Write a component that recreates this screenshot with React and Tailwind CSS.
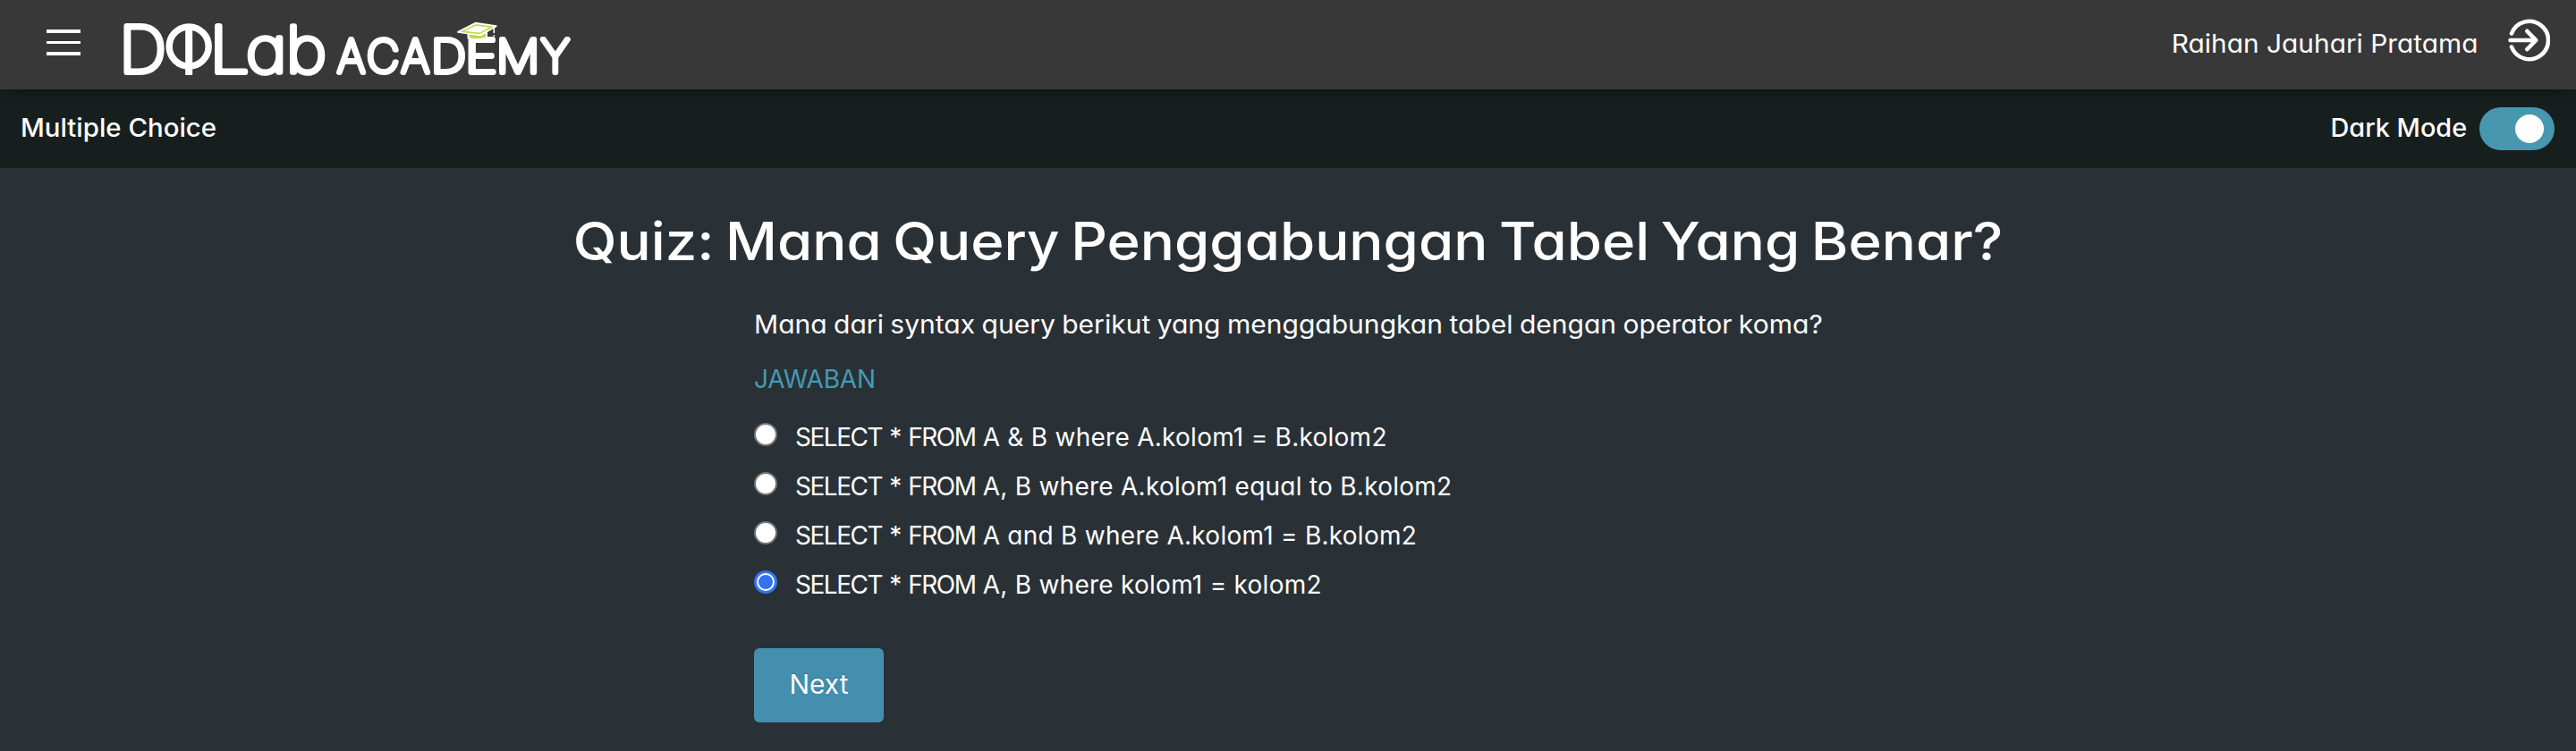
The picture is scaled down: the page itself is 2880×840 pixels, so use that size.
const OPTIONS = [
  { sql: "SELECT * FROM", rest: " A & B where A.kolom1 = B.kolom2", checked: false },
  { sql: "SELECT * FROM", rest: " A, B where A.kolom1 equal to B.kolom2", checked: false },
  { sql: "SELECT * FROM", rest: " A and B where A.kolom1 = B.kolom2", checked: false },
  { sql: "SELECT * FROM", rest: " A, B where kolom1 = kolom2", checked: true },
];

function Logo() {
  return (
    <svg
      width="510"
      height="72"
      viewBox="134 18 510 72"
      className="shrink-0 overflow-visible font-['Inter',sans-serif] font-thin [font-feature-settings:'cv11']"
      fill="#fff"
      stroke="#fff"
      strokeLinejoin="round"
      strokeLinecap="round"
    >
      <g fontSize="71.5" strokeWidth="6">
        <text transform="translate(133.3 81) scale(1.03 1)">D</text>
        <text transform="translate(234.5 81) scale(1.1 1)">L</text>
        <text transform="translate(274.8 81) scale(1.11 1)" strokeWidth="5.6">a</text>
        <text transform="translate(319.5 81) scale(1.1 1)" strokeWidth="5.6">b</text>
      </g>
      <circle cx="211.2" cy="52" r="22" fill="none" strokeWidth="7.5" />
      <rect x="207.2" y="28" width="8" height="56" stroke="none" />
      <g fontSize="50.3" strokeWidth="5.8">
        <text transform="translate(377.2 81.2) scale(.956 1)">A</text>
        <text transform="translate(410 81.2)">C</text>
        <text transform="translate(448.7 81.2) scale(.97 1)">A</text>
        <text transform="translate(482 81.2) scale(1.08 1)">D</text>
        <text transform="translate(520.3 81.2) scale(1.2 1)">E</text>
        <text transform="translate(555 81.2) scale(1.07 1)">M</text>
        <text transform="translate(605 81.2) scale(.98 1)">Y</text>
      </g>
      <g>
        <path d="M523.5 38v4.500q9 3.500 20.500 0v-6z" fill="#c3d64a" strokeWidth="2" />
        <path d="M512 35.800L531.500 25.800L554.700 29.200L537 39.300z" strokeWidth="2" />
        <path d="M516.500 35.300L532 27.900L550 30.200L536 37.400z" stroke="#c3d64a" strokeWidth="1.600" />
        <path d="M552.300 31v5.500M552.300 39.800v.4" strokeWidth="1.600" />
      </g>
    </svg>
  );
}

function ExitIcon() {
  return (
    <svg width="48" height="48" viewBox="0 0 48 48" fill="none" stroke="#fff" strokeWidth="4.600" strokeLinecap="round" strokeLinejoin="round">
      <path d="M5 16.500A21.200 21.200 0 1 1 5 31.500" />
      <path d="M3.500 24H32M22.300 13.800L32.300 24L22.300 34.200" />
    </svg>
  );
}

function Radio({ checked }) {
  return checked ? (
    <span className="mb-[5px] flex size-[26px] items-center justify-center rounded-full border-[3px] border-[#3373f2] bg-white">
      <span className="size-4 rounded-full bg-[#3373f2]" />
    </span>
  ) : (
    <span className="mb-[5px] size-[26px] rounded-full border-2 border-[#767676] bg-white" />
  );
}

export default function App() {
  return (
    <div className="h-[840px] overflow-hidden bg-[#293137] font-['Inter','Open_Sans',sans-serif] text-[28px] leading-[42px] text-white [font-feature-settings:'cv11']">
      <header className="relative flex h-[100px] items-center bg-[#383838] pr-[29px] pl-[52px] shadow-[0_8px_12px_-8px_rgba(0,0,0,0.6)]">
        <button className="mb-[5px] flex w-[38px] flex-col gap-[9px]" aria-label="Menu">
          <span className="h-[3.500px] w-full bg-white" />
          <span className="h-[3.500px] w-full bg-white" />
          <span className="h-[3.500px] w-full bg-white" />
        </button>
        <div className="ml-11 pt-[8px]">
          <Logo />
        </div>
        <span className="mr-px mb-[3px] ml-auto origin-right scale-x-[1.066]">Raihan Jauhari Pratama</span>
        <span className="mb-[11px] ml-[32px]">
          <ExitIcon />
        </span>
      </header>

      <div className="flex h-[88px] items-center justify-between bg-[#171f1e] pr-6 pl-[23px] font-medium">
        <span className="mb-[2px] origin-left scale-x-[1.05]">Multiple Choice</span>
        <div className="flex items-center gap-[14px]">
          <span className="mb-[2px] origin-right scale-x-[1.03]">Dark Mode</span>
          <span className="flex h-12 w-[84px] items-center justify-end rounded-full bg-[#4797af] pr-3">
            <span className="size-8 rounded-full bg-white" />
          </span>
        </div>
      </div>

      <main className="pt-[37px]">
        <h1 className="scale-x-[1.076] text-center text-[59px] leading-[90px] font-medium [word-spacing:-4px]">
          Quiz: Mana Query Penggabungan Tabel Yang Benar?
        </h1>
        <div className="mx-auto w-[1194px] pt-[27px]">
          <p className="origin-left scale-x-[1.073] whitespace-nowrap [word-spacing:-1px]">
            Mana dari syntax query berikut yang menggabungkan tabel dengan operator koma?
          </p>
          <p className="mt-[19px] tracking-[-0.200px] text-[#459ab4]">JAWABAN</p>
          <div className="mt-4 flex flex-col">
            {OPTIONS.map((o) => (
              <label key={o.rest} className="flex h-[55px] items-center gap-5">
                <Radio checked={o.checked} />
                <span className="whitespace-pre tracking-[0.26px]">
                  <span className="tracking-[-1.500px] [word-spacing:2px]">{o.sql}</span>
                  {o.rest}
                </span>
              </label>
            ))}
          </div>
          <button className="mt-11 flex h-[83px] w-[145px] items-center justify-center rounded-md bg-[#448fae] pb-[3px] text-[30px] [text-shadow:0_-1px_1px_rgba(0,0,0,0.25)]">
            Next
          </button>
        </div>
      </main>
    </div>
  );
}
